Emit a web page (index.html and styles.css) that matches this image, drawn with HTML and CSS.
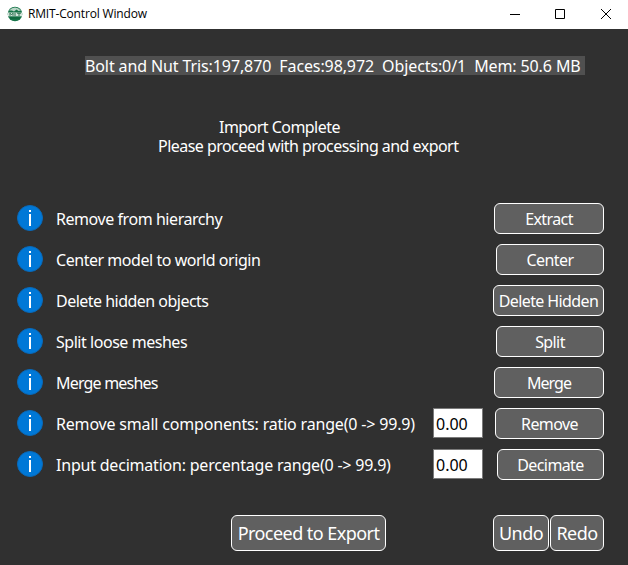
FILE: index.html
```html
<!DOCTYPE html>
<html lang="en">
<head>
<meta charset="utf-8">
<title>RMIT-Control Window</title>
<link rel="stylesheet" href="styles.css">
</head>
<body>
<header class="titlebar">
  <svg class="logo" viewBox="0 0 16 16"><circle cx="8" cy="8" r="7.3" fill="#167449"/><path d="M2 4.5Q8-1.5 14 4.5L11.5 5 9.5 3.5 7 5.5 5 4.5Z" fill="#b9d5c6"/><path d="M1 6.5h14v3.8H1z" fill="#d5e5dc"/><path d="M3 9.8V7.2l1.5 1.5L6 7.2v2.6M8 7v3M10 7.2h4M12 7v3" stroke="#28724e" fill="none"/><path d="M3 12h10" stroke="#0d6038"/></svg>
  <h1 class="title">RMIT-Control Window</h1>
  <svg class="controls" viewBox="0 0 104 12" fill="none" stroke="#000"><path d="M0 6.5h10M45.5 1.5h9v9h-9zM91 1l10 10M101 1l-10 10"/></svg>
</header>
<main class="panel">
  <p class="stats">Bolt and Nut Tris:197,870&nbsp; Faces:98,972&nbsp; Objects:0/1&nbsp; Mem: 50.6 MB</p>
  <div class="message"><p class="complete">Import Complete</p><p class="proceed">Please proceed with processing and export</p></div>
  <section class="actions">
    <div class="row"><span class="info"></span><span class="label l1">Remove from hierarchy</span><button class="btn w110">Extract</button></div>
    <div class="row"><span class="info"></span><span class="label l2">Center model to world origin</span><button class="btn w108">Center</button></div>
    <div class="row"><span class="info"></span><span class="label l3">Delete hidden objects</span><button class="btn w111">Delete Hidden</button></div>
    <div class="row"><span class="info"></span><span class="label l4">Split loose meshes</span><button class="btn w108">Split</button></div>
    <div class="row"><span class="info"></span><span class="label l5">Merge meshes</span><button class="btn w110 tight">Merge</button></div>
    <div class="row"><span class="info"></span><span class="label l6">Remove small components: ratio range(0 -&gt; 99.9)</span><input class="value" value="0.00"><button class="btn w109">Remove</button></div>
    <div class="row"><span class="info"></span><span class="label l7">Input decimation: percentage range(0 -&gt; 99.9)</span><input class="value" value="0.00"><button class="btn w107">Decimate</button></div>
  </section>
  <footer class="footer"><button class="btn big export">Proceed to Export</button><button class="btn big undo">Undo</button><button class="btn big redo">Redo</button></footer>
</main>
</body>
</html>
```
FILE: styles.css
```css
* { box-sizing: border-box; }
body { margin: 0; width: 628px; height: 565px; overflow: hidden; background: #303030; color: #fff; font: 16px/19px "Noto Sans", "DejaVu Sans", sans-serif; }
p, h1 { margin: 0; white-space: pre; }
.titlebar { height: 29px; background: #fff; color: #000; display: flex; align-items: center; padding: 0 17px 2px 7px; }
.logo { width: 16px; height: 16px; }
.title { font: 12px/16px "Open Sans", sans-serif; letter-spacing: -0.17px; margin-left: 5px; }
.controls { width: 104px; height: 12px; margin-left: auto; margin-right: -3px; }
.stats { margin: 27px 0 0 85px; width: 500px; height: 19px; line-height: 21px; background: #505050; letter-spacing: -0.11px; }
.message { margin-top: 43px; height: 38px; letter-spacing: -0.54px; }
.complete { margin-left: 219px; }
.proceed { margin-left: 158px; }
.actions { margin: 47px 24px 0 17px; display: grid; gap: 10px; }
.row { height: 31px; display: flex; align-items: center; }
.info { width: 26px; height: 26px; border-radius: 50%; background: #0078d7; border: 1px solid #086abb; margin-top: -1px; display: flex; flex-direction: column; align-items: center; }
.info::before { content: ""; width: 2px; height: 2px; margin-top: 4px; background: #fff; }
.info::after { content: ""; width: 2px; height: 12px; margin-top: 2px; background: #fff; }
.label { margin-left: 13px; padding-top: 2px; flex: 1; white-space: nowrap; width: 0; }
.l1 { letter-spacing: -0.44px; }
.l2 { letter-spacing: -0.46px; }
.l3 { letter-spacing: -0.52px; }
.l4 { letter-spacing: -0.46px; }
.l5 { letter-spacing: -0.8px; }
.l6 { letter-spacing: -0.18px; }
.l7 { letter-spacing: -0.21px; }
.btn { height: 31px; padding: 2px 0 0; border: 1px solid #fff; border-radius: 6px; background: #606060; color: #fff; font: inherit; letter-spacing: -0.6px; white-space: nowrap; }
.tight { letter-spacing: -1px; }
.w107 { width: 107px; }
.w108 { width: 108px; }
.w109 { width: 109px; }
.w110 { width: 110px; }
.w111 { width: 111px; }
.value { width: 50px; height: 30px; margin: 0 auto 1px 0; padding: 2px 2px 0; border: 1px solid #7a7a7a; border-radius: 0; background: #fff; color: #000; font: inherit; }
.row:has(.value) .label { flex: 0 0 377px; }
.footer { display: flex; margin: 35px 24px 0 231px; }
.big { height: 36px; padding: 1px 0 0; font-size: 18px; letter-spacing: -0.55px; }
.export { width: 155px; }
.undo { width: 56px; margin-left: auto; }
.redo { width: 54px; margin-left: 1px; }
```
